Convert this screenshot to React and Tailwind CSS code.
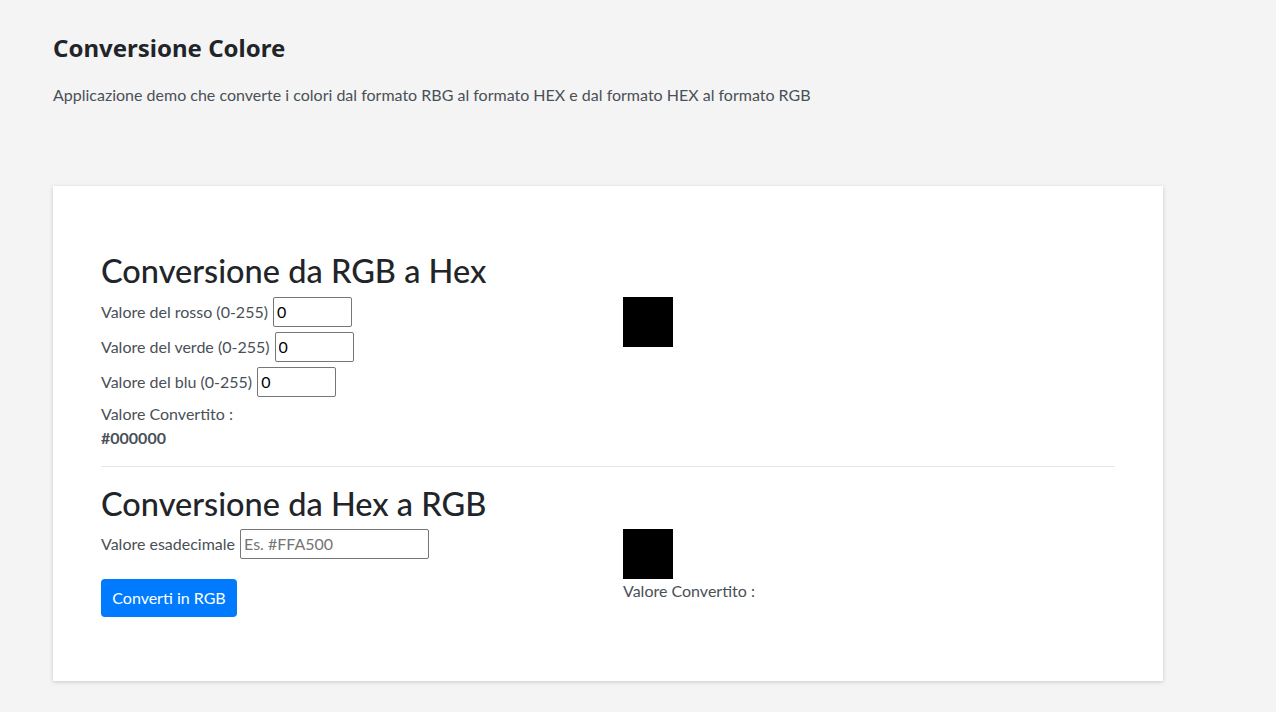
const font = { fontFamily: "Lato, 'Noto Sans', sans-serif" };

function Row({ label, width }) {
  return (
    <div className="flex h-[30px] items-center">
      <label className="text-[16px] text-[#495057]">{label}</label>
      <input
        type="text"
        defaultValue="0"
        className={`ml-[5px] h-[30px] ${width} rounded-[2px] border border-[#767676] bg-white px-[3px] text-[16px] text-black outline-none`}
      />
    </div>
  );
}

export default function App() {
  return (
    <div className="min-h-screen bg-[#f4f4f4] px-[53px] pt-[34px] pb-[30px]" style={font}>
      <h1 className="font-['Noto_Sans',sans-serif] text-[24px] font-bold leading-[1.2] text-[#212529]">
        Conversione Colore
      </h1>
      <p className="mt-[20px] text-[16px] leading-[24px] text-[#495057]">
        Applicazione demo che converte i colori dal formato RBG al formato HEX e dal formato HEX al formato RGB
      </p>

      <section className="mt-[79px] w-[1110px] bg-white px-[48px] pt-[66px] pb-[64px] shadow-[0_1px_4px_rgba(0,0,0,0.18)]">
        <h2 className="mb-[7px] text-[32.5px] font-medium leading-[38px] text-[#212529]">Conversione da RGB a Hex</h2>
        <div className="grid grid-cols-2 gap-[30px]">
          <div>
            <div className="flex flex-col gap-[5px]">
              <Row label="Valore del rosso (0-255)" width="w-[79px]" />
              <Row label="Valore del verde (0-255)" width="w-[79px]" />
              <Row label="Valore del blu (0-255)" width="w-[79px]" />
            </div>
            <p className="mt-[5px] text-[16px] leading-[24px] text-[#495057]">Valore Convertito :</p>
            <p className="text-[16px] font-bold leading-[24px] text-[#495057]">#000000</p>
          </div>
          <div>
            <div className="h-[50px] w-[50px] bg-black" />
          </div>
        </div>

        <hr className="mt-[16px] border-0 border-t border-[#e6e6e6]" />

        <h2 className="mt-[18px] mb-[6px] text-[32.5px] font-medium leading-[38px] text-[#212529]">Conversione da Hex a RGB</h2>
        <div className="grid grid-cols-2 gap-[30px]">
          <div>
            <div className="flex h-[30px] items-center">
              <label className="text-[16px] text-[#495057]">Valore esadecimale</label>
              <input
                type="text"
                placeholder="Es. #FFA500"
                className="ml-[5px] h-[30px] w-[189px] rounded-[2px] border border-[#767676] bg-white px-[3px] text-[16px] text-black outline-none placeholder:text-[#757575]"
              />
            </div>
            <button className="mt-[20px] h-[38px] w-[136px] rounded-[4px] bg-[#007bff] text-[16px] text-white">
              Converti in RGB
            </button>
          </div>
          <div>
            <div className="h-[50px] w-[50px] bg-black" />
            <p className="text-[16px] leading-[24px] text-[#495057]">Valore Convertito :</p>
          </div>
        </div>
      </section>
    </div>
  );
}
